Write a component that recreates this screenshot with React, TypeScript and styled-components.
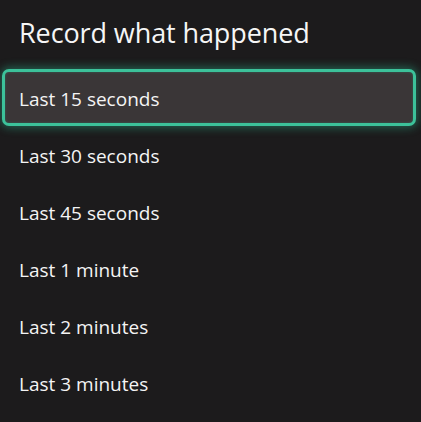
import React from 'react';
import { styled, createGlobalStyle } from 'styled-components';

const GlobalStyle = createGlobalStyle`
  html, body {
    margin: 0;
    padding: 0;
    background: #1c1b1c;
  }
  body {
    font-family: 'Open Sans', 'Noto Sans', sans-serif;
    color: #f2f2f2;
  }
`;

const options = [
  'Last 15 seconds',
  'Last 30 seconds',
  'Last 45 seconds',
  'Last 1 minute',
  'Last 2 minutes',
  'Last 3 minutes',
];

const App = () => {
  const selected = 0;

  return (
    <>
      <GlobalStyle />
      <Panel>
        <Title>Record what happened</Title>
        <OptionList>
          {options.map((label, i) => (
            <Option key={label} $active={i === selected}>
              {label}
            </Option>
          ))}
        </OptionList>
      </Panel>
    </>
  );
};

export default App;

const Panel = styled.div`
  display: flex;
  flex-direction: column;
  width: 421px;
  height: 422px;
  box-sizing: border-box;
  padding-top: 13px;
  background: #1c1b1c;
  overflow: hidden;
`;
const Title = styled.h1`
  margin: 0 0 0 19px;
  height: 56px;
  font-size: 27px;
  font-weight: 400;
  line-height: 40px;
  letter-spacing: -0.1px;
  color: #f6f6f6;
`;
const OptionList = styled.div`
  display: flex;
  flex-direction: column;
`;
const Option = styled.div<{ $active?: boolean }>`
  display: flex;
  align-items: center;
  height: 57px;
  margin: 0 5px 0 2px;
  padding: 3px 0 0 14px;
  box-sizing: border-box;
  border: 3px solid ${({ $active }) => ($active ? '#3cc29a' : 'transparent')};
  border-radius: 7px;
  background: ${({ $active }) => ($active ? '#3a3637' : 'transparent')};
  box-shadow: ${({ $active }) =>
    $active
      ? '0 0 8px 2px rgba(45, 180, 140, 0.45), inset 0 0 3px rgba(45, 180, 140, 0.35)'
      : 'none'};
  font-size: 19px;
  color: #f4f4f4;
`;
